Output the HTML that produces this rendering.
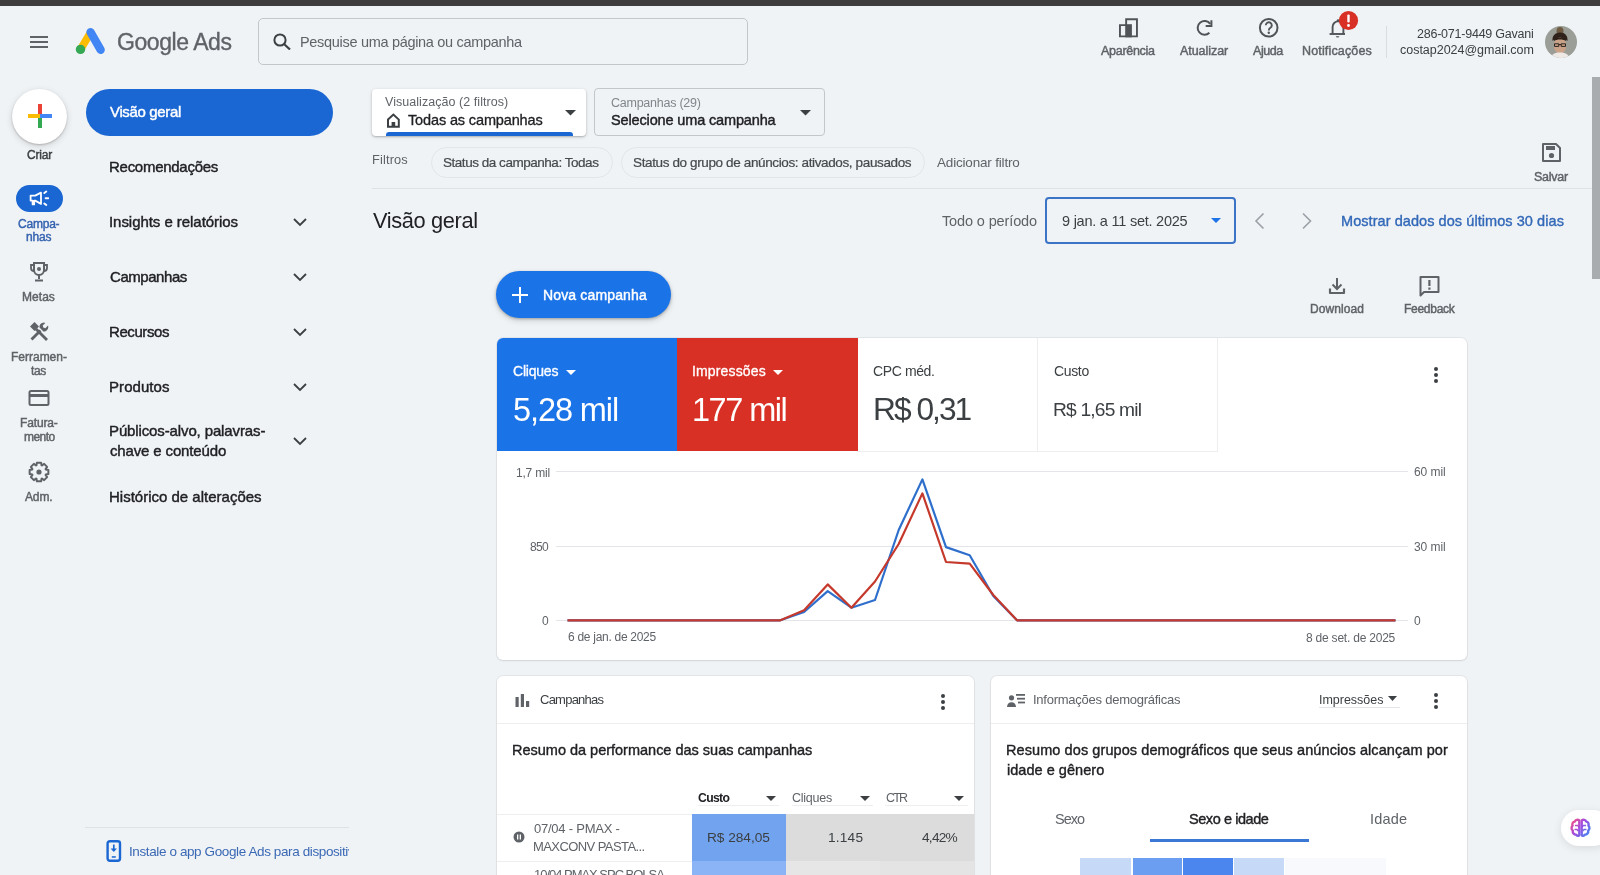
<!DOCTYPE html>
<html><head><meta charset="utf-8"><style>
html,body{margin:0;padding:0;width:1600px;height:875px;overflow:hidden;background:#f0f3f5;}
body{position:relative;font-family:"Liberation Sans", sans-serif;}
.t{position:absolute;white-space:nowrap;font-family:"Liberation Sans", sans-serif;will-change:transform;}
svg{display:block}
</style></head><body>
<div style="position:absolute;left:0px;top:0px;width:1600px;height:6.4px;background:#3c3d3c"></div>
<div style="position:absolute;left:30px;top:36px;width:18px;height:2px;background:#5f6368"></div>
<div style="position:absolute;left:30px;top:41px;width:18px;height:2px;background:#5f6368"></div>
<div style="position:absolute;left:30px;top:46px;width:18px;height:2px;background:#5f6368"></div>
<svg style="position:absolute;left:74px;top:26px;" width="32" height="30" viewBox="0 0 32 30">
<g transform="translate(0,0)">
<line x1="6.6" y1="23.2" x2="16.6" y2="6.5" stroke="#fbbc04" stroke-width="7.6" stroke-linecap="round"/>
<line x1="16.6" y1="6.2" x2="26.6" y2="23.8" stroke="#4285f4" stroke-width="8.4" stroke-linecap="round"/>
<circle cx="6.5" cy="23.4" r="4.7" fill="#34a853"/>
</g></svg>
<div class="t" style="left:116.83px;top:31px;font-size:23px;line-height:23px;color:#5f6368;-webkit-text-stroke:0.35px #5f6368;letter-spacing:-0.449px;">Google Ads</div>
<div style="position:absolute;left:258px;top:18px;width:490px;height:47px;box-sizing:border-box;border:1px solid #c4c7c9;border-radius:5px;background:#f0f3f5"></div>
<svg style="position:absolute;left:272px;top:32px;" width="20" height="18" viewBox="0 0 20 18"><circle cx="8" cy="8" r="5.6" fill="none" stroke="#3c4043" stroke-width="2"/><line x1="12" y1="12" x2="18" y2="17.5" stroke="#3c4043" stroke-width="2.2"/></svg>
<div class="t" style="left:300.00px;top:35px;font-size:14.5px;line-height:14.5px;color:#5f6368;letter-spacing:-0.310px;">Pesquise uma página ou campanha</div>
<svg style="position:absolute;left:1117px;top:16px;" width="24" height="24" viewBox="0 0 24 24"><path d="M2.95 20.35V9.15H9.15V3.25H19.95V20.35Z" fill="none" stroke="#505458" stroke-width="1.9"/><rect x="8.2" y="8.2" width="6.7" height="13.1" fill="#505458"/></svg>
<div class="t" style="left:1100.78px;top:45px;font-size:12.5px;line-height:12.5px;color:#5f6368;-webkit-text-stroke:0.45px #5f6368;letter-spacing:-0.286px;">Aparência</div>
<svg style="position:absolute;left:1193px;top:16px;" width="24" height="24" viewBox="0 0 24 24"><path d="M16.4 16.8A6.9 6.9 0 1 1 17.2 7.9" fill="none" stroke="#505458" stroke-width="2"/><path d="M18.4 4.2V9.9H12.7" fill="none" stroke="#505458" stroke-width="2"/></svg>
<div class="t" style="left:1179.78px;top:45px;font-size:12.5px;line-height:12.5px;color:#5f6368;-webkit-text-stroke:0.45px #5f6368;letter-spacing:-0.053px;">Atualizar</div>
<svg style="position:absolute;left:1257px;top:16px;" width="24" height="24" viewBox="0 0 24 24"><circle cx="11.7" cy="11.8" r="8.8" fill="none" stroke="#505458" stroke-width="2"/><path d="M8.8 9.3a3 3 0 1 1 4.6 2.5c-1 .7-1.6 1.2-1.6 2.6" fill="none" stroke="#505458" stroke-width="1.9"/><circle cx="11.8" cy="16.8" r="1.2" fill="#505458"/></svg>
<div class="t" style="left:1252.78px;top:45px;font-size:12.5px;line-height:12.5px;color:#5f6368;-webkit-text-stroke:0.45px #5f6368;letter-spacing:-0.442px;">Ajuda</div>
<svg style="position:absolute;left:1326px;top:16px;" width="24" height="24" viewBox="0 0 24 24"><path d="M6.6 17.6V10.8a5.4 5.4 0 0 1 10.8 0v6.8" fill="none" stroke="#505458" stroke-width="1.9"/><path d="M3.6 18h15.4" stroke="#505458" stroke-width="1.9"/><path d="M9.8 20.2h3.6a1.8 1.4 0 0 1-3.6 0z" fill="#505458"/><circle cx="12" cy="4.6" r="1.3" fill="#505458"/></svg>
<svg style="position:absolute;left:1338px;top:10px;" width="21" height="21" viewBox="0 0 21 21"><circle cx="10.5" cy="10.5" r="9.6" fill="#d93025"/><rect x="9.3" y="4.5" width="2.4" height="8" rx="1" fill="#fff"/><circle cx="10.5" cy="15.5" r="1.4" fill="#fff"/></svg>
<div class="t" style="left:1301.78px;top:45px;font-size:12.5px;line-height:12.5px;color:#5f6368;-webkit-text-stroke:0.45px #5f6368;letter-spacing:0.156px;">Notificações</div>
<div style="position:absolute;left:1386px;top:26px;width:1px;height:32px;background:#dadce0"></div>
<div class="t" style="left:1417.00px;top:28px;font-size:12.5px;line-height:12.5px;color:#3c4043;letter-spacing:-0.230px;">286-071-9449 Gavani</div>
<div class="t" style="left:1399.50px;top:44px;font-size:12.5px;line-height:12.5px;color:#3c4043;letter-spacing:-0.020px;">costap2024@gmail.com</div>
<svg style="position:absolute;left:1545px;top:26px;" width="32" height="32" viewBox="0 0 32 32"><defs><clipPath id="av"><circle cx="16" cy="16" r="16"/></clipPath></defs>
<g clip-path="url(#av)"><rect width="32" height="32" fill="#9a9e97"/>
<ellipse cx="15" cy="5" rx="3.5" ry="4" fill="#6e5a40"/>
<path d="M7.5 15c-.5-5 2.5-8.5 7.5-8.5s8 3 7.5 8.5c-1-1.5-3-2.5-7.5-2.5S8.5 13.5 7.5 15z" fill="#2e221a"/>
<ellipse cx="15" cy="19.5" rx="6.2" ry="8" fill="#c9a287"/>
<path d="M8.5 13.5c1.5-1.5 4-2 6.5-2s5 .5 6.5 2l-.5 1.5c-1.5-1-3.5-1.5-6-1.5s-4.5.5-6 1.5z" fill="#2e221a"/>
<path d="M9.5 17.8h4.3v2.6H9.5zM16.2 17.8h4.3v2.6h-4.3zM13.8 18.6h2.4" fill="none" stroke="#2a2420" stroke-width="1"/>
<path d="M6 32c.5-4 4-5.5 9-5.5s8.5 1.5 9 5.5z" fill="#efe9e6"/></g></svg>
<div style="position:absolute;left:12px;top:89px;width:55px;height:55px;border-radius:50%;background:#fff;box-shadow:0 1px 2px rgba(0,0,0,.2),0 2px 7px rgba(0,0,0,.14)"></div>
<div style="position:absolute;left:38px;top:104px;width:4px;height:12px;background:#ea4335"></div>
<div style="position:absolute;left:38px;top:116px;width:4px;height:12px;background:#34a853"></div>
<div style="position:absolute;left:28px;top:114px;width:12px;height:4px;background:#fbbc04"></div>
<div style="position:absolute;left:40px;top:114px;width:12px;height:4px;background:#4285f4"></div>
<div class="t" style="left:26.77px;top:149px;font-size:12px;line-height:12px;color:#3c4043;-webkit-text-stroke:0.45px #3c4043;letter-spacing:-0.213px;">Criar</div>
<div style="position:absolute;left:16px;top:185px;width:47px;height:27px;border-radius:14px;background:#1a67d3"></div>
<svg style="position:absolute;left:27px;top:188px;" width="24" height="22" viewBox="0 0 24 22"><path d="M3.6 7.6H8.2L14 4.6V15.9L8.2 12.6H7.2V16.4H5.6V12.6H3.6Z" fill="none" stroke="#fff" stroke-width="1.8" stroke-linejoin="round"/><path d="M17.3 5.1l2-1.5M18.6 10.3h2.6M17.3 15.5l2 1.5" stroke="#fff" stroke-width="1.9" stroke-linecap="round"/></svg>
<div class="t" style="left:17.79px;top:218px;font-size:12px;line-height:12px;color:#3563b0;-webkit-text-stroke:0.42px #3563b0;letter-spacing:-0.221px;">Campa-</div>
<div class="t" style="left:25.79px;top:231px;font-size:12px;line-height:12px;color:#3563b0;-webkit-text-stroke:0.42px #3563b0;letter-spacing:-0.147px;">nhas</div>
<svg style="position:absolute;left:27px;top:260px;" width="24" height="24" viewBox="0 0 24 24"><path d="M7 3h10v7a5 5 0 0 1-10 0z" fill="none" stroke="#5f6368" stroke-width="2"/><path d="M7 5H4v3a3 3 0 0 0 3 3M17 5h3v3a3 3 0 0 1-3 3" fill="none" stroke="#5f6368" stroke-width="1.8"/><path d="M12 15v4M8 20.5h8" stroke="#5f6368" stroke-width="2"/><circle cx="12" cy="9" r="2" fill="#5f6368"/></svg>
<div class="t" style="left:21.77px;top:291px;font-size:12px;line-height:12px;color:#5f6368;-webkit-text-stroke:0.45px #5f6368;letter-spacing:0.043px;">Metas</div>
<svg style="position:absolute;left:27px;top:320px;" width="24" height="24" viewBox="0 0 24 24"><path d="M9 9l11 11" stroke="#5f6368" stroke-width="2.8"/><path d="M3 6.5L7.5 2l4.5 4.5-4.5 4.5z" fill="#5f6368"/><path d="M4.5 19.5l9-9" stroke="#5f6368" stroke-width="2.8"/><path d="M12.5 7.5a4.3 4.3 0 0 1 5.8-4.6l-2.6 2.6.6 2.1 2.1.6 2.6-2.6a4.3 4.3 0 0 1-4.6 5.8z" fill="#5f6368"/></svg>
<div class="t" style="left:10.78px;top:351px;font-size:12px;line-height:12px;color:#5f6368;-webkit-text-stroke:0.45px #5f6368;letter-spacing:-0.008px;">Ferramen-</div>
<div class="t" style="left:30.77px;top:365px;font-size:12px;line-height:12px;color:#5f6368;-webkit-text-stroke:0.45px #5f6368;letter-spacing:-0.329px;">tas</div>
<svg style="position:absolute;left:27px;top:386px;" width="24" height="24" viewBox="0 0 24 24"><rect x="2.5" y="5" width="19" height="14" rx="1.5" fill="none" stroke="#5f6368" stroke-width="2"/><rect x="2.5" y="8" width="19" height="3" fill="#5f6368"/></svg>
<div class="t" style="left:19.77px;top:417px;font-size:12px;line-height:12px;color:#5f6368;-webkit-text-stroke:0.45px #5f6368;letter-spacing:-0.139px;">Fatura-</div>
<div class="t" style="left:23.77px;top:431px;font-size:12px;line-height:12px;color:#5f6368;-webkit-text-stroke:0.45px #5f6368;letter-spacing:-0.532px;">mento</div>
<svg style="position:absolute;left:27px;top:460px;" width="24" height="24" viewBox="0 0 24 24"><path d="M18.74 9.46 L21.37 9.90 L21.37 14.10 L18.74 14.54 L18.56 14.97 L20.11 17.14 L17.14 20.11 L14.97 18.56 L14.54 18.74 L14.10 21.37 L9.90 21.37 L9.46 18.74 L9.03 18.56 L6.86 20.11 L3.89 17.14 L5.44 14.97 L5.26 14.54 L2.63 14.10 L2.63 9.90 L5.26 9.46 L5.44 9.03 L3.89 6.86 L6.86 3.89 L9.03 5.44 L9.46 5.26 L9.90 2.63 L14.10 2.63 L14.54 5.26 L14.97 5.44 L17.14 3.89 L20.11 6.86 L18.56 9.03Z" fill="none" stroke="#5f6368" stroke-width="2" stroke-linejoin="round"/><circle cx="12" cy="12" r="2.6" fill="#5f6368"/></svg>
<div class="t" style="left:24.77px;top:491px;font-size:12px;line-height:12px;color:#5f6368;-webkit-text-stroke:0.45px #5f6368;letter-spacing:-0.141px;">Adm.</div>
<div style="position:absolute;left:86px;top:89px;width:247px;height:47px;border-radius:24px;background:#1a67d3"></div>
<div class="t" style="left:109.79px;top:104px;font-size:15px;line-height:15px;color:#fff;-webkit-text-stroke:0.42px #fff;letter-spacing:-0.356px;">Visão geral</div>
<div class="t" style="left:108.79px;top:159px;font-size:15px;line-height:15px;color:#202124;-webkit-text-stroke:0.42px #202124;letter-spacing:-0.274px;">Recomendações</div>
<div class="t" style="left:108.79px;top:214px;font-size:15px;line-height:15px;color:#202124;-webkit-text-stroke:0.42px #202124;letter-spacing:-0.049px;">Insights e relatórios</div>
<svg style="position:absolute;left:292px;top:217px;" width="16" height="10" viewBox="0 0 16 10"><path d="M2 2l6 6 6-6" fill="none" stroke="#3c4043" stroke-width="1.8"/></svg>
<div class="t" style="left:109.79px;top:269px;font-size:15px;line-height:15px;color:#202124;-webkit-text-stroke:0.42px #202124;letter-spacing:-0.450px;">Campanhas</div>
<svg style="position:absolute;left:292px;top:272px;" width="16" height="10" viewBox="0 0 16 10"><path d="M2 2l6 6 6-6" fill="none" stroke="#3c4043" stroke-width="1.8"/></svg>
<div class="t" style="left:108.79px;top:324px;font-size:15px;line-height:15px;color:#202124;-webkit-text-stroke:0.42px #202124;letter-spacing:-0.411px;">Recursos</div>
<svg style="position:absolute;left:292px;top:327px;" width="16" height="10" viewBox="0 0 16 10"><path d="M2 2l6 6 6-6" fill="none" stroke="#3c4043" stroke-width="1.8"/></svg>
<div class="t" style="left:108.79px;top:379px;font-size:15px;line-height:15px;color:#202124;-webkit-text-stroke:0.42px #202124;letter-spacing:0.063px;">Produtos</div>
<svg style="position:absolute;left:292px;top:382px;" width="16" height="10" viewBox="0 0 16 10"><path d="M2 2l6 6 6-6" fill="none" stroke="#3c4043" stroke-width="1.8"/></svg>
<div class="t" style="left:108.79px;top:423px;font-size:15px;line-height:15px;color:#202124;-webkit-text-stroke:0.42px #202124;letter-spacing:-0.124px;">Públicos-alvo, palavras-</div>
<div class="t" style="left:109.79px;top:443px;font-size:15px;line-height:15px;color:#202124;-webkit-text-stroke:0.42px #202124;letter-spacing:-0.147px;">chave e conteúdo</div>
<svg style="position:absolute;left:292px;top:436px;" width="16" height="10" viewBox="0 0 16 10"><path d="M2 2l6 6 6-6" fill="none" stroke="#3c4043" stroke-width="1.8"/></svg>
<div class="t" style="left:108.79px;top:489px;font-size:15px;line-height:15px;color:#202124;-webkit-text-stroke:0.42px #202124;">Histórico de alterações</div>
<div style="position:absolute;left:85px;top:827px;width:264px;height:1px;background:#dfe1e3"></div>
<svg style="position:absolute;left:105px;top:839px;" width="18" height="24" viewBox="0 0 18 24"><rect x="2.6" y="2.2" width="12.4" height="19.6" rx="2.2" fill="none" stroke="#1a67d3" stroke-width="2.4"/><path d="M8.8 5.5v6.5" stroke="#1a67d3" stroke-width="1.7"/><path d="M5.6 9.6h6.4l-3.2 3.4z" fill="#1a67d3"/><rect x="6.8" y="17.2" width="4" height="1.5" fill="#1a67d3"/></svg>
<div style="position:absolute;left:129px;top:0;width:220px;height:875px;overflow:hidden">
<div class="t" style="left:0.00px;top:845px;font-size:13.5px;line-height:13.5px;color:#3a69b5;letter-spacing:-0.390px;">Instale o app Google Ads para dispositivos</div>
</div>
<div style="position:absolute;left:372px;top:89px;width:214px;height:47px;background:#fff;border-radius:4px;box-shadow:0 1px 2px rgba(0,0,0,.22),0 1px 4px rgba(0,0,0,.1)"></div>
<div class="t" style="left:384.50px;top:96px;font-size:12.5px;line-height:12.5px;color:#5f6368;letter-spacing:0.049px;">Visualização (2 filtros)</div>
<svg style="position:absolute;left:385px;top:112px;" width="17" height="17" viewBox="0 0 17 17"><path d="M3 7.6L8.4 2.6L13.8 7.6V14.8H3Z" fill="none" stroke="#3c4043" stroke-width="2" stroke-linejoin="miter"/><rect x="6.6" y="10" width="3.6" height="4.8" fill="#3c4043"/></svg>
<div class="t" style="left:407.84px;top:113px;font-size:14.5px;line-height:14.5px;color:#202124;-webkit-text-stroke:0.32px #202124;letter-spacing:-0.135px;">Todas as campanhas</div>
<svg style="position:absolute;left:565px;top:110px;" width="11" height="6" viewBox="0 0 11 6"><path d="M0 0h11L5.5 5.5z" fill="#3c4043"/></svg>
<div style="position:absolute;left:386px;top:132px;width:187px;height:4px;background:#1a67d3;border-radius:3px 3px 0 0"></div>
<div style="position:absolute;left:594px;top:88px;width:231px;height:48px;box-sizing:border-box;border:1px solid #c4c7c9;border-radius:4px"></div>
<div class="t" style="left:611.00px;top:97px;font-size:12.5px;line-height:12.5px;color:#80868b;letter-spacing:-0.249px;">Campanhas (29)</div>
<div class="t" style="left:610.79px;top:113px;font-size:14.5px;line-height:14.5px;color:#202124;-webkit-text-stroke:0.42px #202124;letter-spacing:-0.144px;">Selecione uma campanha</div>
<svg style="position:absolute;left:800px;top:110px;" width="11" height="6" viewBox="0 0 11 6"><path d="M0 0h11L5.5 5.5z" fill="#3c4043"/></svg>
<div class="t" style="left:372.00px;top:154px;font-size:12.8px;line-height:12.8px;color:#5f6368;letter-spacing:0.144px;">Filtros</div>
<div style="position:absolute;left:431px;top:147px;width:182px;height:31px;box-sizing:border-box;border:1px solid #e3e6e8;border-radius:16px"></div>
<div class="t" style="left:443.39px;top:156px;font-size:13.5px;line-height:13.5px;color:#46494d;-webkit-text-stroke:0.22px #46494d;letter-spacing:-0.468px;">Status da campanha: Todas</div>
<div style="position:absolute;left:621px;top:147px;width:304px;height:31px;box-sizing:border-box;border:1px solid #e3e6e8;border-radius:16px"></div>
<div class="t" style="left:632.89px;top:156px;font-size:13.5px;line-height:13.5px;color:#46494d;-webkit-text-stroke:0.22px #46494d;letter-spacing:-0.373px;">Status do grupo de anúncios: ativados, pausados</div>
<div class="t" style="left:937.00px;top:156px;font-size:13.5px;line-height:13.5px;color:#5f6368;letter-spacing:-0.182px;">Adicionar filtro</div>
<svg style="position:absolute;left:1540px;top:141px;" width="24" height="22" viewBox="0 0 24 22"><path d="M3 3h13l4 4v13H3z" fill="none" stroke="#5f6368" stroke-width="2" stroke-linejoin="round"/><rect x="6" y="5" width="9" height="4" fill="#5f6368"/><circle cx="11.5" cy="14.5" r="2.6" fill="#5f6368"/></svg>
<div class="t" style="left:1533.78px;top:171px;font-size:12.5px;line-height:12.5px;color:#5f6368;-webkit-text-stroke:0.45px #5f6368;letter-spacing:-0.244px;">Salvar</div>
<div style="position:absolute;left:372px;top:188px;width:1220px;height:1px;background:#dfe2e4"></div>
<div class="t" style="left:373.00px;top:210px;font-size:21.8px;line-height:21.8px;color:#202124;letter-spacing:-0.361px;">Visão geral</div>
<div class="t" style="left:942.00px;top:214px;font-size:14.5px;line-height:14.5px;color:#5f6368;letter-spacing:-0.129px;">Todo o período</div>
<div style="position:absolute;left:1045px;top:197px;width:191px;height:47px;box-sizing:border-box;border:2px solid #3b73c6;border-radius:4px"></div>
<div class="t" style="left:1062.40px;top:214px;font-size:14.5px;line-height:14.5px;color:#3c4043;letter-spacing:-0.233px;">9 jan. a 11 set. 2025</div>
<svg style="position:absolute;left:1211px;top:218px;" width="10" height="6" viewBox="0 0 10 6"><path d="M0 0h10L5 5z" fill="#1b73e8"/></svg>
<svg style="position:absolute;left:1253px;top:212px;" width="14" height="18" viewBox="0 0 14 18"><path d="M10.5 1.5L3 9l7.5 7.5" fill="none" stroke="#9aa0a6" stroke-width="1.6"/></svg>
<svg style="position:absolute;left:1300px;top:212px;" width="14" height="18" viewBox="0 0 14 18"><path d="M3 1.5L10.5 9 3 16.5" fill="none" stroke="#9aa0a6" stroke-width="1.6"/></svg>
<div class="t" style="left:1341.41px;top:214px;font-size:14.5px;line-height:14.5px;color:#3268b8;-webkit-text-stroke:0.37px #3268b8;letter-spacing:0.064px;">Mostrar dados dos últimos 30 dias</div>
<div style="position:absolute;left:496px;top:271px;width:175px;height:47px;border-radius:24px;background:#1b73e8;box-shadow:0 1px 3px rgba(0,0,0,.28),0 3px 6px rgba(0,0,0,.12)"></div>
<div style="position:absolute;left:519px;top:287px;width:2px;height:16px;background:#fff"></div>
<div style="position:absolute;left:512px;top:294px;width:16px;height:2px;background:#fff"></div>
<div class="t" style="left:542.79px;top:288px;font-size:14px;line-height:14px;color:#fff;-webkit-text-stroke:0.42px #fff;letter-spacing:0.151px;">Nova campanha</div>
<svg style="position:absolute;left:1327px;top:276px;" width="20" height="20" viewBox="0 0 20 20"><path d="M10 2v11M5.5 8.5L10 13l4.5-4.5" fill="none" stroke="#5f6368" stroke-width="2"/><path d="M3 12.5v4.5h14v-4.5" fill="none" stroke="#5f6368" stroke-width="2.2" stroke-linejoin="round"/></svg>
<div class="t" style="left:1309.78px;top:303px;font-size:12px;line-height:12px;color:#5f6368;-webkit-text-stroke:0.45px #5f6368;letter-spacing:0.065px;">Download</div>
<svg style="position:absolute;left:1418px;top:275px;" width="24" height="22" viewBox="0 0 24 22"><path d="M2.5 2h18v15H6l-3.5 3.5z" fill="none" stroke="#5f6368" stroke-width="2" stroke-linejoin="round"/><rect x="10.3" y="5" width="2.2" height="6" fill="#5f6368"/><rect x="10.3" y="12.5" width="2.2" height="2.2" fill="#5f6368"/></svg>
<div class="t" style="left:1403.78px;top:303px;font-size:12px;line-height:12px;color:#5f6368;-webkit-text-stroke:0.45px #5f6368;letter-spacing:-0.278px;">Feedback</div>
<div style="position:absolute;left:497px;top:338px;width:970px;height:322px;background:#fff;border-radius:6px;box-shadow:0 0 0 1px rgba(0,0,0,.05),0 1px 2px rgba(0,0,0,.08)"></div>
<div style="position:absolute;left:497px;top:338px;width:180px;height:113px;background:#1b73e8;border-radius:6px 0 0 0"></div>
<div style="position:absolute;left:677px;top:338px;width:181px;height:113px;background:#d93025"></div>
<div style="position:absolute;left:857px;top:451px;width:361px;height:1px;background:#eceeef"></div>
<div style="position:absolute;left:1037px;top:338px;width:1px;height:113px;background:#eceeef"></div>
<div style="position:absolute;left:1217px;top:338px;width:1px;height:113px;background:#eceeef"></div>
<div class="t" style="left:512.84px;top:364px;font-size:14px;line-height:14px;color:#fff;-webkit-text-stroke:0.32px #fff;letter-spacing:-0.218px;">Cliques</div>
<svg style="position:absolute;left:566px;top:370px;" width="10" height="6" viewBox="0 0 10 6"><path d="M0 0h10L5 5z" fill="#fff"/></svg>
<div class="t" style="left:512.60px;top:394px;font-size:32.5px;line-height:32.5px;color:#fff;letter-spacing:-1.082px;">5,28 mil</div>
<div class="t" style="left:691.84px;top:364px;font-size:14px;line-height:14px;color:#fff;-webkit-text-stroke:0.32px #fff;letter-spacing:0.147px;">Impressões</div>
<svg style="position:absolute;left:773px;top:370px;" width="10" height="6" viewBox="0 0 10 6"><path d="M0 0h10L5 5z" fill="#fff"/></svg>
<div class="t" style="left:692.00px;top:394px;font-size:32.5px;line-height:32.5px;color:#fff;letter-spacing:-1.508px;">177 mil</div>
<div class="t" style="left:873.30px;top:364px;font-size:14px;line-height:14px;color:#3c4043;letter-spacing:-0.383px;">CPC méd.</div>
<div class="t" style="left:872.50px;top:394px;font-size:31.7px;line-height:31.7px;color:#3c4043;letter-spacing:-1.960px;">R$ 0,31</div>
<div class="t" style="left:1053.80px;top:364px;font-size:14px;line-height:14px;color:#3c4043;letter-spacing:-0.347px;">Custo</div>
<div class="t" style="left:1053.30px;top:400px;font-size:19.2px;line-height:19.2px;color:#3c4043;letter-spacing:-0.808px;">R$ 1,65 mil</div>
<div style="position:absolute;left:1434px;top:366.5px;width:4px;height:4px;border-radius:50%;background:#3c4043"></div>
<div style="position:absolute;left:1434px;top:372.5px;width:4px;height:4px;border-radius:50%;background:#3c4043"></div>
<div style="position:absolute;left:1434px;top:378.5px;width:4px;height:4px;border-radius:50%;background:#3c4043"></div>
<div style="position:absolute;left:556px;top:471px;width:852px;height:1px;background:#e3e5e8"></div>
<div style="position:absolute;left:556px;top:545.5px;width:852px;height:1px;background:#e3e5e8"></div>
<div style="position:absolute;left:556px;top:620px;width:852px;height:1px;background:#e3e5e8"></div>
<div class="t" style="left:515.60px;top:467px;font-size:12px;line-height:12px;color:#5f6368;letter-spacing:-0.213px;">1,7 mil</div>
<div class="t" style="left:530.00px;top:541px;font-size:12px;line-height:12px;color:#5f6368;letter-spacing:-0.674px;">850</div>
<div class="t" style="left:542.00px;top:615px;font-size:12px;line-height:12px;color:#5f6368;">0</div>
<div class="t" style="left:1414.00px;top:466px;font-size:12px;line-height:12px;color:#5f6368;letter-spacing:-0.069px;">60 mil</div>
<div class="t" style="left:1414.00px;top:541px;font-size:12px;line-height:12px;color:#5f6368;letter-spacing:-0.069px;">30 mil</div>
<div class="t" style="left:1414.00px;top:615px;font-size:12px;line-height:12px;color:#5f6368;">0</div>
<div class="t" style="left:567.50px;top:631px;font-size:12px;line-height:12px;color:#5f6368;letter-spacing:-0.286px;">6 de jan. de 2025</div>
<div class="t" style="left:1306.40px;top:632px;font-size:12px;line-height:12px;color:#5f6368;letter-spacing:-0.217px;">8 de set. de 2025</div>
<svg style="position:absolute;left:556px;top:455px;" width="852" height="180" viewBox="0 0 852 180"><polyline points="11.5,165.3 35.2,165.3 58.8,165.3 82.5,165.3 106.1,165.3 129.8,165.3 153.4,165.3 177.1,165.3 200.8,165.3 224.4,165.3 248.1,157.0 271.7,136.2 295.4,152.7 319.0,145.0 342.7,75.0 366.4,24.4 390.0,92.1 413.7,100.2 437.3,141.0 461.0,165.3 484.6,165.3 508.3,165.3 532.0,165.3 555.6,165.3 579.3,165.3 602.9,165.3 626.6,165.3 650.2,165.3 673.9,165.3 697.6,165.3 721.2,165.3 744.9,165.3 768.5,165.3 792.2,165.3 815.8,165.3 839.5,165.3" fill="none" stroke="#2f6fcc" stroke-width="2.2" stroke-linejoin="round"/><polyline points="11.5,165.3 35.2,165.3 58.8,165.3 82.5,165.3 106.1,165.3 129.8,165.3 153.4,165.3 177.1,165.3 200.8,165.3 224.4,165.3 248.1,155.3 271.7,129.4 295.4,152.7 319.0,126.5 342.7,89.0 366.4,38.4 390.0,107.0 413.7,108.6 437.3,140.0 461.0,165.3 484.6,165.3 508.3,165.3 532.0,165.3 555.6,165.3 579.3,165.3 602.9,165.3 626.6,165.3 650.2,165.3 673.9,165.3 697.6,165.3 721.2,165.3 744.9,165.3 768.5,165.3 792.2,165.3 815.8,165.3 839.5,165.3" fill="none" stroke="#c5392c" stroke-width="2.2" stroke-linejoin="round"/></svg>
<div style="position:absolute;left:497px;top:676px;width:477px;height:220px;background:#fff;border-radius:6px;box-shadow:0 0 0 1px rgba(0,0,0,.05),0 1px 2px rgba(0,0,0,.08)"></div>
<svg style="position:absolute;left:515px;top:693px;" width="15" height="15" viewBox="0 0 15 15"><rect x="0.5" y="4" width="3.2" height="10" fill="#5f6368"/><rect x="5.8" y="1" width="3.2" height="13" fill="#5f6368"/><rect x="11" y="8" width="3.2" height="6" fill="#5f6368"/></svg>
<div class="t" style="left:540.00px;top:693px;font-size:13px;line-height:13px;color:#3c4043;letter-spacing:-0.762px;">Campanhas</div>
<div style="position:absolute;left:940.5px;top:693.5px;width:4px;height:4px;border-radius:50%;background:#3c4043"></div>
<div style="position:absolute;left:940.5px;top:699.5px;width:4px;height:4px;border-radius:50%;background:#3c4043"></div>
<div style="position:absolute;left:940.5px;top:705.5px;width:4px;height:4px;border-radius:50%;background:#3c4043"></div>
<div style="position:absolute;left:497px;top:723px;width:477px;height:1px;background:#eceeef"></div>
<div class="t" style="left:512.12px;top:743px;font-size:14.5px;line-height:14.5px;color:#202124;-webkit-text-stroke:0.37px #202124;letter-spacing:-0.007px;">Resumo da performance das suas campanhas</div>
<div class="t" style="left:698.00px;top:792px;font-size:12.2px;line-height:12.2px;color:#202124;font-weight:700;letter-spacing:-0.646px;">Custo</div>
<svg style="position:absolute;left:766px;top:796px;" width="10" height="5" viewBox="0 0 10 5"><path d="M0 0h10L5 5z" fill="#3c4043"/></svg>
<div style="position:absolute;left:698px;top:805px;width:81px;height:1px;background:#eceeef"></div>
<div class="t" style="left:792.00px;top:792px;font-size:12.5px;line-height:12.5px;color:#5f6368;letter-spacing:-0.240px;">Cliques</div>
<svg style="position:absolute;left:860px;top:796px;" width="10" height="5" viewBox="0 0 10 5"><path d="M0 0h10L5 5z" fill="#3c4043"/></svg>
<div style="position:absolute;left:792px;top:805px;width:81px;height:1px;background:#eceeef"></div>
<div class="t" style="left:885.70px;top:792px;font-size:12.5px;line-height:12.5px;color:#5f6368;letter-spacing:-1.831px;">CTR</div>
<svg style="position:absolute;left:954px;top:796px;" width="10" height="5" viewBox="0 0 10 5"><path d="M0 0h10L5 5z" fill="#3c4043"/></svg>
<div style="position:absolute;left:885px;top:805px;width:83px;height:1px;background:#eceeef"></div>
<div style="position:absolute;left:497px;top:814px;width:477px;height:1px;background:#eceeef"></div>
<div style="position:absolute;left:692px;top:814px;width:94px;height:47px;background:#72a3ee"></div>
<div style="position:absolute;left:786px;top:814px;width:188px;height:47px;background:#dcdcdc"></div>
<div style="position:absolute;left:497px;top:861px;width:195px;height:1px;background:#eceeef"></div>
<div style="position:absolute;left:692px;top:861px;width:94px;height:14px;background:#8ab4f6"></div>
<div style="position:absolute;left:786px;top:861px;width:94px;height:14px;background:#e6e6e6"></div>
<div style="position:absolute;left:880px;top:861px;width:94px;height:14px;background:#e4e4e4"></div>
<svg style="position:absolute;left:513px;top:831px;" width="12" height="12" viewBox="0 0 12 12"><circle cx="6" cy="6" r="5.5" fill="#5f6368"/><rect x="4" y="3.5" width="1.3" height="5" fill="#fff"/><rect x="6.7" y="3.5" width="1.3" height="5" fill="#fff"/></svg>
<div class="t" style="left:533.70px;top:822px;font-size:13px;line-height:13px;color:#5f6368;letter-spacing:-0.234px;">07/04 - PMAX -</div>
<div class="t" style="left:532.70px;top:840px;font-size:13px;line-height:13px;color:#5f6368;letter-spacing:-0.577px;">MAXCONV PASTA...</div>
<div class="t" style="left:533.70px;top:868px;font-size:13px;line-height:13px;color:#5f6368;letter-spacing:-1.024px;">10/04 PMAX SPC BOLSA...</div>
<div class="t" style="left:706.75px;top:831px;font-size:13.7px;line-height:13.7px;color:#3c4043;letter-spacing:-0.032px;">R$ 284,05</div>
<div class="t" style="left:828.40px;top:831px;font-size:13.7px;line-height:13.7px;color:#3c4043;letter-spacing:0.190px;">1.145</div>
<div class="t" style="left:921.90px;top:831px;font-size:13.7px;line-height:13.7px;color:#3c4043;letter-spacing:-0.760px;">4,42%</div>
<div style="position:absolute;left:991px;top:676px;width:476px;height:220px;background:#fff;border-radius:6px;box-shadow:0 0 0 1px rgba(0,0,0,.05),0 1px 2px rgba(0,0,0,.08)"></div>
<svg style="position:absolute;left:1007px;top:693px;" width="19" height="15" viewBox="0 0 19 15"><circle cx="4.5" cy="4.8" r="2.6" fill="#5f6368"/><path d="M0 14c0-3 2-4.8 4.5-4.8S9 11 9 14z" fill="#5f6368"/><rect x="9" y="1" width="9" height="1.8" fill="#5f6368"/><rect x="10" y="4.8" width="8" height="1.8" fill="#5f6368"/><rect x="11" y="8.6" width="7" height="1.8" fill="#5f6368"/></svg>
<div class="t" style="left:1033.20px;top:693px;font-size:13px;line-height:13px;color:#5f6368;letter-spacing:-0.247px;">Informações demográficas</div>
<div class="t" style="left:1318.50px;top:694px;font-size:12.5px;line-height:12.5px;color:#3c4043;letter-spacing:-0.017px;">Impressões</div>
<svg style="position:absolute;left:1388px;top:696px;" width="9" height="6" viewBox="0 0 9 6"><path d="M0 0h9L4.5 5z" fill="#3c4043"/></svg>
<div style="position:absolute;left:1319px;top:707px;width:81px;height:1px;background:#e3e5e8"></div>
<div style="position:absolute;left:1434px;top:692.5px;width:4px;height:4px;border-radius:50%;background:#3c4043"></div>
<div style="position:absolute;left:1434px;top:698.5px;width:4px;height:4px;border-radius:50%;background:#3c4043"></div>
<div style="position:absolute;left:1434px;top:704.5px;width:4px;height:4px;border-radius:50%;background:#3c4043"></div>
<div style="position:absolute;left:991px;top:723px;width:476px;height:1px;background:#eceeef"></div>
<div class="t" style="left:1005.57px;top:743px;font-size:14.5px;line-height:14.5px;color:#202124;-webkit-text-stroke:0.37px #202124;letter-spacing:0.083px;">Resumo dos grupos demográficos que seus anúncios alcançam por</div>
<div class="t" style="left:1006.57px;top:763px;font-size:14.5px;line-height:14.5px;color:#202124;-webkit-text-stroke:0.37px #202124;letter-spacing:0.034px;">idade e gênero</div>
<div class="t" style="left:1055.20px;top:812px;font-size:14.5px;line-height:14.5px;color:#5f6368;letter-spacing:-0.995px;">Sexo</div>
<div class="t" style="left:1189.32px;top:812px;font-size:14.5px;line-height:14.5px;color:#202124;-webkit-text-stroke:0.37px #202124;letter-spacing:-0.432px;">Sexo e idade</div>
<div class="t" style="left:1370.00px;top:812px;font-size:14.5px;line-height:14.5px;color:#5f6368;letter-spacing:0.170px;">Idade</div>
<div style="position:absolute;left:1150px;top:839px;width:159px;height:3px;background:#3b78d6"></div>
<div style="position:absolute;left:1080px;top:858px;width:51px;height:17px;background:#c6daf8"></div>
<div style="position:absolute;left:1133px;top:858px;width:48.5px;height:17px;background:#6b9df0"></div>
<div style="position:absolute;left:1183px;top:858px;width:50px;height:17px;background:#4a86ee"></div>
<div style="position:absolute;left:1234px;top:858px;width:49.5px;height:17px;background:#c6daf8"></div>
<div style="position:absolute;left:1285px;top:858px;width:101px;height:17px;background:#f7f9fd"></div>
<div style="position:absolute;left:1592px;top:77px;width:8px;height:202px;background:#a9acae"></div>
<div style="position:absolute;left:1561px;top:810px;width:50px;height:36px;background:#fff;border-radius:18px;box-shadow:0 2px 8px rgba(0,0,0,.10)"></div>
<svg style="position:absolute;left:1570px;top:818px;" width="21" height="20" viewBox="0 0 21 20"><defs><linearGradient id="bg1" gradientUnits="userSpaceOnUse" x1="2" y1="3" x2="19" y2="16"><stop offset="0" stop-color="#f0508a"/><stop offset=".45" stop-color="#a24be0"/><stop offset="1" stop-color="#4a83f0"/></linearGradient></defs>
<g fill="none" stroke="url(#bg1)" stroke-width="2.4" stroke-linejoin="round" stroke-linecap="round">
<path d="M9.3 2.5C8 1.3 5.5 1.6 4.8 3.6 2.8 3.8 1.8 5.8 2.6 7.6 1.2 8.8 1.2 11.6 2.8 12.6 2.4 14.8 4 16.8 6.2 16.6 7 18 8.6 18.2 9.3 17.2z"/>
<path d="M11.7 2.5C13 1.3 15.5 1.6 16.2 3.6 18.2 3.8 19.2 5.8 18.4 7.6 19.8 8.8 19.8 11.6 18.2 12.6 18.6 14.8 17 16.8 14.8 16.6 14 18 12.4 18.2 11.7 17.2z"/>
</g>
<path d="M5 7.5h2.5l1.5 1.5M4.5 11.5h2.5l1.2 1.5M16 7.5h-2.5L12 9M16.5 11.5H14l-1.2 1.5" fill="none" stroke="url(#bg1)" stroke-width="1.3"/></svg>
</body></html>
